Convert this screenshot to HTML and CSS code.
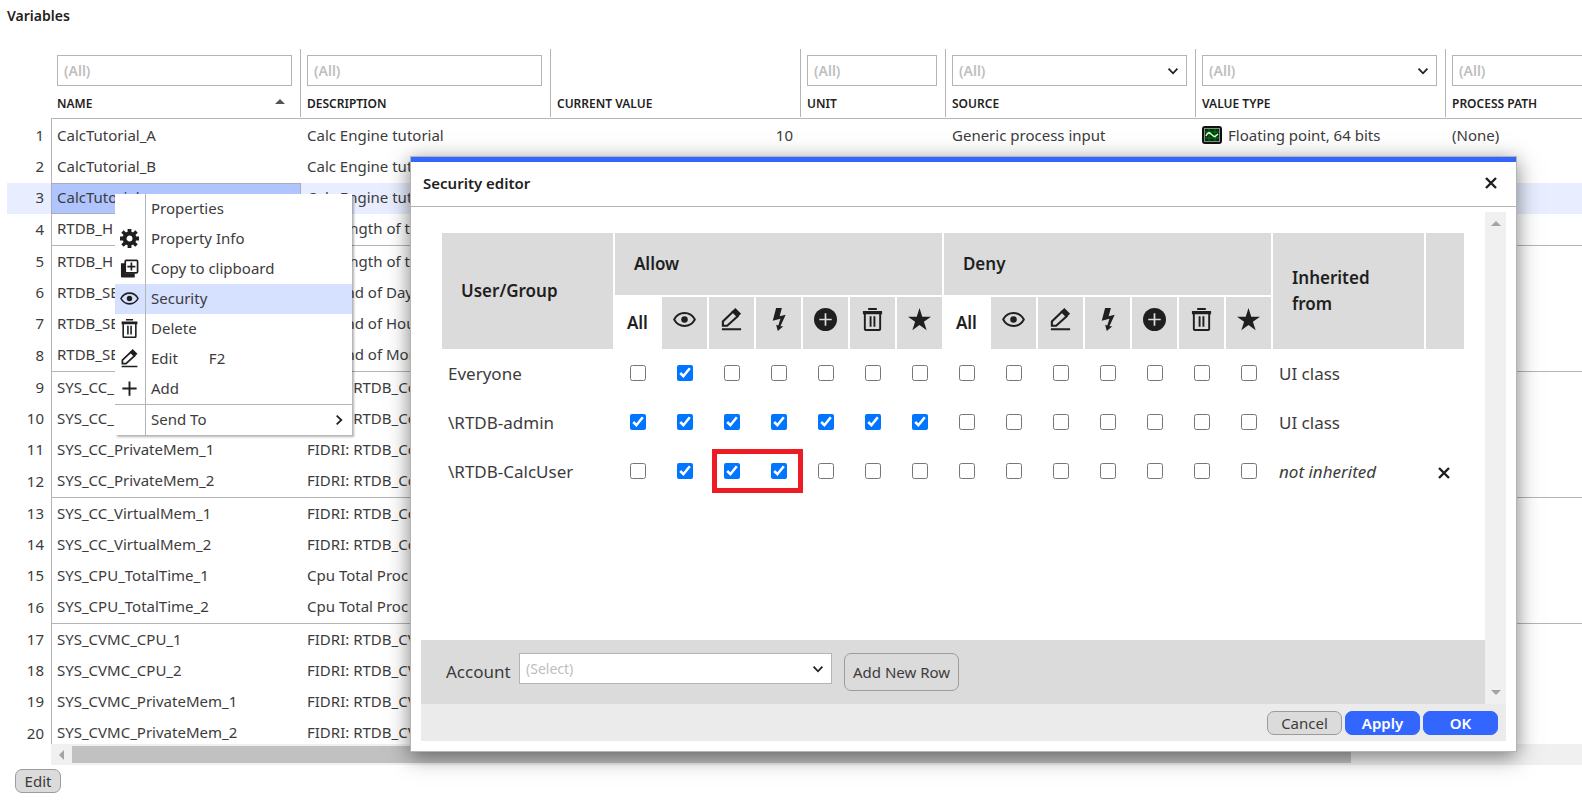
FILE: index.html
```html
<!DOCTYPE HTML>
<html lang="en">
<head>
	<meta charset="utf-8" />
	<title>Variables</title>
	<link rel="stylesheet" href="styles.css">
</head>
<body>
	<svg class="sprite" aria-hidden="true">
		<symbol id="i-gear" viewBox="0 0 20 20">
			<circle cx="10" cy="10" r="5.200" fill="none" stroke="currentColor" stroke-width="4.200"/>
			<path stroke="currentColor" stroke-width="4" d="M10 0v4M10 16v4M0 10h4M16 10h4"/>
			<path stroke="currentColor" stroke-width="3.600" d="M2.600 2.600l3 3M14.400 14.400l3 3M2.600 17.400l3-3M14.400 5.600l3-3"/>
		</symbol>
		<symbol id="i-copy" viewBox="0 0 20 20">
			<path fill="currentColor" d="M1 4.500h4.500v10.500h10v4.500H2a1 1 0 0 1-1-1z"/>
			<rect x="5.500" y="1.500" width="13" height="13" rx="1" fill="none" stroke="currentColor" stroke-width="1.800"/>
			<path stroke="currentColor" stroke-width="1.800" d="M12 3.800v8.400M7.800 8h8.400"/>
		</symbol>
		<symbol id="i-eye" viewBox="0 0 24 24">
			<path fill="none" stroke="currentColor" stroke-width="2" d="M1.200 12C6 3 18 3 22.800 12C18 21 6 21 1.200 12z"/>
			<circle cx="12" cy="12" r="3.400" fill="currentColor"/>
		</symbol>
		<symbol id="i-trash" viewBox="0 0 24 24">
			<path fill="currentColor" d="M7.500 0h9v2h-9zM2 3h20v3.500h-20z"/>
			<path fill="none" stroke="currentColor" stroke-width="2" d="M4 5v17q0 1 1 1h14q1 0 1-1V5M10 8.500v11M14 8.500v11"/>
		</symbol>
		<symbol id="i-pencil" viewBox="0 0 24 24">
			<path fill="currentColor" d="M2 21h20v2.200H2zM12 4L16 0l6 6-4 4z"/>
			<path fill="none" stroke="currentColor" stroke-width="2.200" d="M14 3.500L3 14v4.500h4.500L19 8"/>
		</symbol>
		<symbol id="i-plus" viewBox="0 0 20 20">
			<path stroke="currentColor" stroke-width="2" d="M10 2.500v15M2.500 10h15"/>
		</symbol>
		<symbol id="i-bolt" viewBox="0 0 24 24">
			<path fill="currentColor" d="M9.500 0h6l-2.300 8.500 6.300-1.500-5.500 12h3l-5.700 5-1.800-6.500 2.300.8 2.200-7-8 2z"/>
		</symbol>
		<symbol id="i-pluscircle" viewBox="0 0 24 24">
			<circle cx="12" cy="12" r="12" fill="currentColor"/>
			<path stroke="#dbdbdb" stroke-width="1.800" d="M12 5.500v13M5.500 12h13"/>
		</symbol>
		<symbol id="i-star" viewBox="0 0 24 24">
			<path fill="currentColor" d="M12 0l2.900 9H24l-7.400 5.400 2.900 8.800L12 17.700l-7.500 5.500 2.900-8.800L0 9h9.100z"/>
		</symbol>
		<symbol id="i-chevron" viewBox="0 0 12 12">
			<path fill="none" stroke="currentColor" stroke-width="1.500" d="M2.200 4L6 8l3.800-4"/>
		</symbol>
		<symbol id="i-cross" viewBox="0 0 12 12">
			<path fill="none" stroke="currentColor" stroke-width="2.400" d="M1 1l10 10M11 1L1 11"/>
		</symbol>
		<symbol id="i-trend" viewBox="0 0 20 18">
			<rect x="1" y="1" width="18" height="16" rx="2" fill="#063006" stroke="#111" stroke-width="2"/>
			<rect x="2.500" y="2.500" width="15" height="13" fill="#031" stroke="#8c8c8c"/>
			<path stroke="#0a0" stroke-width=".6" d="M3 6h14M3 12h14M7 3v12M13 3v12"/>
			<path fill="none" stroke="#dfd" stroke-width="1.500" d="M4 10q2-5 5-2t4 2.500l3-2.500"/>
		</symbol>
	</svg>

	<h1 class="page-title">Variables</h1>

	<div class="grid">
		<table class="vars">
			<colgroup>
				<col class="c-num"><col class="c-wide"><col class="c-wide"><col class="c-wide"><col class="c-unit"><col class="c-wide"><col class="c-wide"><col class="c-wide">
			</colgroup>
			<thead>
				<tr>
					<td></td>
					<th><div class="head">
						<input class="filter" type="text" placeholder="(All)" aria-label="Filter name">
						<span class="label sorted">Name</span>
					</div></th>
					<th><div class="head">
						<input class="filter" type="text" placeholder="(All)" aria-label="Filter description">
						<span class="label">Description</span>
					</div></th>
					<th><div class="head"><span class="label">Current value</span></div></th>
					<th><div class="head">
						<input class="filter" type="text" placeholder="(All)" aria-label="Filter unit">
						<span class="label">Unit</span>
					</div></th>
					<th><div class="head">
						<div class="pick">
							<select class="filter" aria-label="Filter source"><option>(All)</option></select>
							<svg><use href="#i-chevron"/></svg>
						</div>
						<span class="label">Source</span>
					</div></th>
					<th><div class="head">
						<div class="pick">
							<select class="filter" aria-label="Filter value type"><option>(All)</option></select>
							<svg><use href="#i-chevron"/></svg>
						</div>
						<span class="label">Value type</span>
					</div></th>
					<th><div class="head">
						<input class="filter" type="text" placeholder="(All)" aria-label="Filter process path">
						<span class="label">Process path</span>
					</div></th>
				</tr>
			</thead>
			<tbody id="varRows"></tbody>
		</table>
	</div>
	<div class="hscroll"><span class="arrow-left"></span><span class="thumb"></span></div>
	<div class="toolbar"><button class="btn edit" type="button">Edit</button></div>

	<ul class="menu">
		<li><button type="button"><i></i><span>Properties</span></button></li>
		<li><button type="button"><i><svg><use href="#i-gear"/></svg></i><span>Property Info</span></button></li>
		<li><button type="button"><i><svg><use href="#i-copy"/></svg></i><span>Copy to clipboard</span></button></li>
		<li><button type="button" class="active"><i><svg><use href="#i-eye"/></svg></i><span>Security</span></button></li>
		<li><button type="button"><i><svg><use href="#i-trash"/></svg></i><span>Delete</span></button></li>
		<li><button type="button"><i><svg><use href="#i-pencil"/></svg></i><span>Edit</span><kbd>F2</kbd></button></li>
		<li><button type="button"><i><svg><use href="#i-plus"/></svg></i><span>Add</span></button></li>
		<li class="split"><button type="button"><i></i><span>Send To</span><svg class="more"><use href="#i-chevron"/></svg></button></li>
	</ul>

	<section class="dialog" role="dialog" aria-labelledby="dialogTitle">
		<header>
			<h2 id="dialogTitle">Security editor</h2>
			<button class="close" type="button" aria-label="Close"><svg><use href="#i-cross"/></svg></button>
		</header>
		<div class="content">
			<div class="scroller">
				<div class="pane">
					<table class="rights">
						<colgroup>
							<col><col class="c-flag" span="14"><col class="c-from"><col class="c-remove">
						</colgroup>
						<thead>
							<tr class="groups">
								<th rowspan="2">User/Group</th>
								<th colspan="7">Allow</th>
								<th colspan="7">Deny</th>
								<th rowspan="2">Inherited from</th>
								<th rowspan="2"></th>
							</tr>
							<tr class="flags" id="flagHeads"></tr>
						</thead>
						<tbody id="rightRows"></tbody>
					</table>
				</div>
				<div class="account">
					<label for="account">Account</label>
					<div class="pick">
						<select class="filter" id="account"><option>(Select)</option></select>
						<svg><use href="#i-chevron"/></svg>
					</div>
					<button class="btn add" type="button">Add New Row</button>
				</div>
			</div>
			<div class="vscroll"><span class="arrow-up"></span><span class="arrow-down"></span></div>
		</div>
		<footer>
			<button class="btn" type="button">Cancel</button>
			<button class="btn primary" type="button">Apply</button>
			<button class="btn primary" type="button">OK</button>
		</footer>
	</section>

	<script>
		const vars = [
			['CalcTutorial_A', 'Calc Engine tutorial'],
			['CalcTutorial_B', 'Calc Engine tutorial'],
			['CalcTutorial', 'Calc Engine tutorial'],
			['RTDB_H', 'The length of the'],
			['RTDB_H', 'The length of the'],
			['RTDB_SE', 'The end of Day'],
			['RTDB_SE', 'The end of Hour'],
			['RTDB_SE', 'The end of Month'],
			['SYS_CC_', 'FIDRI: RTDB_Co'],
			['SYS_CC_', 'FIDRI: RTDB_Co'],
			['SYS_CC_PrivateMem_1', 'FIDRI: RTDB_Co'],
			['SYS_CC_PrivateMem_2', 'FIDRI: RTDB_Co'],
			['SYS_CC_VirtualMem_1', 'FIDRI: RTDB_Co'],
			['SYS_CC_VirtualMem_2', 'FIDRI: RTDB_Co'],
			['SYS_CPU_TotalTime_1', 'Cpu Total Proc'],
			['SYS_CPU_TotalTime_2', 'Cpu Total Proc'],
			['SYS_CVMC_CPU_1', 'FIDRI: RTDB_CV'],
			['SYS_CVMC_CPU_2', 'FIDRI: RTDB_CV'],
			['SYS_CVMC_PrivateMem_1', 'FIDRI: RTDB_CV'],
			['SYS_CVMC_PrivateMem_2', 'FIDRI: RTDB_CV']
		]

		let varHTML = ''

		vars.forEach((v, i) => {
			varHTML += '<tr class="' + (i === 2 ? 'selected' : '') + '"><td class="num">' + (i + 1) + '</td>'
			varHTML += '<td class="name">' + v[0] + '</td><td>' + v[1] + '</td>'

			if (i === 0) {
				varHTML += '<td class="value">10</td><td></td><td>Generic process input</td>'
				varHTML += '<td><span class="type"><svg><use href="#i-trend"/></svg>Floating point, 64 bits</span></td><td>(None)</td>'
			} else {
				varHTML += '<td></td><td></td><td></td><td></td><td></td>'
			}

			varHTML += '</tr>'
		})

		document.getElementById('varRows').innerHTML = varHTML

		const icons = ['eye', 'pencil', 'bolt', 'pluscircle', 'trash', 'star'],
			flags = ['all', 'read', 'modify', 'execute', 'create', 'delete', 'admin'],
			rights = [
				{ user: 'Everyone', allow: [1], from: 'UI class' },
				{ user: '\\RTDB-admin', allow: [0, 1, 2, 3, 4, 5, 6], from: 'UI class' },
				{ user: '\\RTDB-CalcUser', allow: [1, 2, 3], from: '' }
			]

		const group = '<th class="all">All</th>' + icons.map(i => '<th><svg><use href="#i-' + i + '"/></svg></th>').join('')

		document.getElementById('flagHeads').innerHTML = group + group

		let rightHTML = ''

		rights.forEach(r => {
			rightHTML += '<tr><td>' + r.user + '</td>'

			for (let n = 0; n < 14; n++) {
				let kind = (n < 7 ? 'Allow ' : 'Deny ') + flags[n % 7]

				rightHTML += '<td class="flag' + (!r.from && n === 2 ? ' marked' : '') + '">'
				rightHTML += '<input type="checkbox" aria-label="' + kind + '"' + (r.allow.includes(n) ? ' checked' : '') + '></td>'
			}

			rightHTML += '<td>' + (r.from || '<em>not inherited</em>') + '</td><td class="remove">'
			rightHTML += r.from ? '' : '<button type="button" aria-label="Remove"><svg><use href="#i-cross"/></svg></button>'
			rightHTML += '</td></tr>'
		})

		document.getElementById('rightRows').innerHTML = rightHTML
	</script>
</body>
</html>
```
FILE: styles.css
```css
*,
*::after {
	box-sizing: border-box;
}
body {
	color: #1f1f1f;
	display: flex;
	flex-direction: column;
	font-family: "Noto Sans", "Open Sans", sans-serif;
	font-size: 15px;
	height: 100vh;
	margin: 0;
	overflow: hidden;
	position: relative;
}
button,
input,
select {
	color: inherit;
	font: inherit;
	margin: 0;
}
table {
	border-spacing: 0;
	table-layout: fixed;
}
th,
td {
	padding: 0;
	text-align: left;
}
.sprite {
	height: 0;
	position: absolute;
	width: 0;
}

/* page */
.page-title {
	font-size: 14px;
	font-weight: 600;
	line-height: 32px;
	margin: 0;
	padding: 0 7px 17px;
}
.grid {
	flex: 1;
	margin-left: 7px;
	min-height: 0;
	overflow: hidden;
}
.vars {
	width: 1689px;
}
.c-num {
	width: 44px;
}
.c-wide {
	width: 250px;
}
.c-unit {
	width: 145px;
}
.vars thead th {
	border-bottom: 1px solid #b4b4b4;
	font-weight: 600;
	height: 70px;
}
.head {
	border-right: 1px solid #b4b4b4;
	display: flex;
	flex-direction: column;
	height: 68px;
	justify-content: space-between;
	margin-bottom: 1px;
	padding: 6px 8px 2px 6px;
}
.head .label:only-child {
	margin-top: auto;
}
.label {
	display: block;
	font-size: 12px;
	line-height: 22px;
	text-transform: uppercase;
}
.sorted {
	align-items: center;
	display: flex;
	justify-content: space-between;
}
.sorted::after {
	border: 5px solid transparent;
	border-bottom-color: #555;
	border-top-width: 0;
	content: "";
	margin: 0 7px 6px 0;
}
.filter {
	appearance: none;
	background: #fff;
	border: 1px solid #b4b4b4;
	border-radius: 0;
	display: block;
	font-size: 14px;
	height: 31px;
	padding: 0 6px;
	width: 100%;
}
input.filter::placeholder,
select.filter {
	color: #bebebe;
	opacity: 1;
}
.pick {
	position: relative;
}
.pick svg {
	height: 14px;
	pointer-events: none;
	position: absolute;
	right: 7px;
	top: 9px;
	width: 14px;
}
.vars tbody td {
	color: #3c3c3c;
	height: 31px;
	line-height: 20px;
	padding: 0 6px 3px;
	white-space: nowrap;
}
.vars tbody tr:nth-child(4n) td {
	border-bottom: 1px solid #b4b4b4;
	height: 32px;
}
.vars tbody tr:nth-child(4n + 1) td {
	height: 32px;
	padding-top: 1px;
}
.vars tbody tr:first-child td {
	height: 33px;
	padding-top: 2px;
}
.vars tbody .name {
	border-left: 1px solid #b4b4b4;
	padding-left: 5px;
}
.vars tbody .num,
.vars tbody tr:nth-child(4n) .num {
	border-bottom: 0;
	padding-right: 7px;
	text-align: right;
}
.vars tbody .value {
	padding-right: 8px;
	text-align: right;
}
.vars .selected td {
	background: #e8eeff;
}
.vars .selected .name {
	background: #b0c4ff;
	border: 1px solid #a8adb8;
}
.type {
	align-items: center;
	display: flex;
	gap: 6px;
}
.type svg {
	height: 18px;
	width: 20px;
}
.hscroll {
	align-items: center;
	background: #f0f0f0;
	display: flex;
	flex: none;
	height: 21px;
	margin-left: 51px;
}
.arrow-left,
.arrow-up,
.arrow-down {
	border: 5px solid transparent;
}
.arrow-left {
	border-left-width: 0;
	border-right-color: #a3a3a3;
	margin: 0 8px;
}
.hscroll .thumb {
	background: #c1c1c1;
	height: 17px;
	width: calc(84% - 7px);
}
.toolbar {
	flex: none;
	height: 37px;
	padding: 4px 15px;
}

/* buttons */
.btn {
	background: #dbdbdb;
	border: 1px solid #9c9c9c;
	border-radius: 7px;
	color: #3c3c3c;
	height: 24px;
	line-height: 22px;
	padding: 0;
	width: 75px;
}
.btn.edit {
	width: 46px;
}
.btn.add {
	height: 38px;
	width: 115px;
}
.btn.primary {
	background: #36f;
	border-color: #36f;
	color: #fff;
	font-weight: 600;
}

/* context menu */
.menu {
	background: linear-gradient(90deg, transparent 30px, #b4b4b4 30px, #b4b4b4 31px, transparent 31px) #fff;
	box-shadow: 2px 2px 2px rgba(0, 0, 0, .3);
	left: 115px;
	list-style: none;
	margin: 0;
	padding: 0;
	position: absolute;
	top: 194px;
	width: 237px;
}
.menu button {
	align-items: center;
	background: none;
	border: 0;
	display: flex;
	height: 30px;
	padding: 0 0 1px;
	text-align: left;
	width: 100%;
}
.menu .active {
	background: linear-gradient(90deg, transparent 30px, #b4b4b4 30px, #b4b4b4 31px, transparent 31px) #d6e0ff;
}
.menu i {
	display: flex;
	flex: none;
	justify-content: center;
	margin-right: 7px;
	width: 29px;
}
.menu i svg {
	height: 19px;
	width: 19px;
}
.menu span,
.menu kbd {
	color: #3c3c3c;
	font: inherit;
	padding-bottom: 1px;
}
.menu kbd {
	margin-left: 31px;
}
.menu .split {
	border-top: 1px solid #b4b4b4;
}
.menu .more {
	height: 14px;
	margin: 0 6px 0 auto;
	transform: rotate(-90deg);
	width: 14px;
}

/* security editor */
.dialog {
	background: #fff;
	border: 1px solid #b4b4b4;
	bottom: 50px;
	box-shadow: 0 5px 20px rgba(0, 0, 0, .5);
	display: flex;
	flex-direction: column;
	left: 410px;
	padding-bottom: 10px;
	position: absolute;
	right: 65px;
	top: 156px;
}
.dialog header {
	align-items: center;
	border-bottom: 1px solid #b4b4b4;
	border-top: 5px solid #36f;
	display: flex;
	flex: none;
	height: 50px;
	justify-content: space-between;
	padding: 0 19px 3px 12px;
}
.dialog h2 {
	font-size: 15px;
	font-weight: 600;
	margin: 0;
}
.close,
.remove button {
	background: none;
	border: 0;
	display: block;
	padding: 0;
}
.close svg,
.remove svg {
	display: block;
	height: 12px;
	width: 12px;
}
.content {
	display: flex;
	flex: 1;
	margin: 5px 10px 0;
	min-height: 0;
}
.scroller {
	display: flex;
	flex: 1;
	flex-direction: column;
}
.pane {
	flex: 1;
	padding: 19px 19px 0;
}
.vscroll {
	align-items: center;
	background: #f0f0f0;
	display: flex;
	flex-direction: column;
	justify-content: space-between;
	padding: 9px 0;
	width: 21px;
}
.arrow-up {
	border-bottom-color: #a3a3a3;
	border-top-width: 0;
}
.arrow-down {
	border-bottom-width: 0;
	border-top-color: #a3a3a3;
}
.rights {
	border-spacing: 2px;
	font-size: 17px;
	width: 100%;
}
.c-flag {
	width: 45px;
}
.c-from {
	width: 151px;
}
.c-remove {
	width: 38px;
}
.rights th {
	background: #dbdbdb;
	font-weight: 600;
	line-height: 26px;
}
.groups th {
	height: 62px;
	padding: 0 19px;
}
.flags th {
	height: 52px;
	padding: 0;
	text-align: center;
}
.flags svg {
	display: block;
	height: 23px;
	margin: 0 auto 7px;
	width: 23px;
}
.rights .all {
	background: none;
}
.rights td {
	color: #3c3c3c;
	height: 47px;
	line-height: 24px;
	padding: 0 0 2px 6px;
}
.rights .flag {
	padding: 0 0 0 1px;
	text-align: center;
}
.flag input {
	display: block;
	height: 16px;
	margin: 0 auto 3px;
	width: 16px;
}
.marked {
	position: relative;
}
.marked::after {
	border: 5px solid #ed1c24;
	content: "";
	height: 44px;
	left: 3px;
	pointer-events: none;
	position: absolute;
	top: 0;
	width: 91px;
}
.rights .remove {
	color: #1f1f1f;
	padding: 0 0 0 12px;
}
.account {
	align-items: flex-start;
	background: #dbdbdb;
	display: flex;
	flex: none;
	height: 64px;
	padding: 13px 25px;
}
.account label {
	color: #3c3c3c;
	font-size: 17px;
	line-height: 38px;
	width: 73px;
}
.account .pick {
	margin-right: 12px;
	width: 313px;
}
.dialog footer {
	align-items: center;
	background: #ebebeb;
	display: flex;
	flex: none;
	gap: 3px;
	height: 37px;
	justify-content: flex-end;
	margin: 0 10px;
	padding: 1px 8px 0 0;
}
```
